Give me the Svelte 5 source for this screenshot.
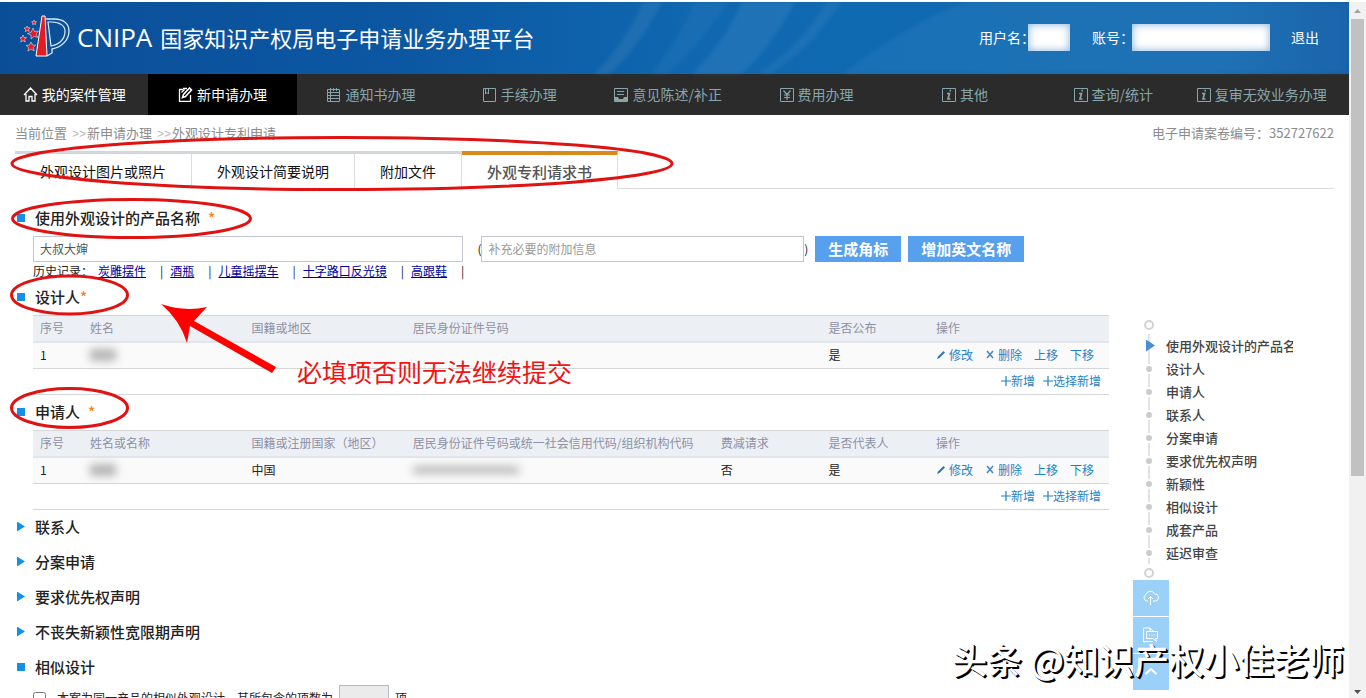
<script>
	let productName = '大叔大婶';
	let extraInfo = '';
	let similar = false;

	const menu = [
		{ label: '我的案件管理', icon: 'home', on: true },
		{ label: '新申请办理', icon: 'edit', on: true, active: true },
		{ label: '通知书办理', icon: 'list' },
		{ label: '手续办理', icon: 'book' },
		{ label: '意见陈述/补正', icon: 'note' },
		{ label: '费用办理', icon: 'yen' },
		{ label: '其他', icon: 'info' },
		{ label: '查询/统计', icon: 'info' },
		{ label: '复审无效业务办理', icon: 'info' }
	];

	const tabs = ['外观设计图片或照片', '外观设计简要说明', '附加文件', '外观专利请求书'];
	let activeTab = 3;

	const history = ['炭雕摆件', '酒瓶', '儿童摇摆车', '十字路口反光镜', '高跟鞋'];

	const tables = [
		{
			title: '设计人',
			tight: true,
			heads: ['序号', '姓名', '国籍或地区', '居民身份证件号码', '', '是否公布', '操作'],
			country: '',
			hasId: false,
			reduce: ''
		},
		{
			title: '申请人',
			tight: false,
			heads: ['序号', '姓名或名称', '国籍或注册国家（地区）', '居民身份证件号码或统一社会信用代码/组织机构代码', '费减请求', '是否代表人', '操作'],
			country: '中国',
			hasId: true,
			reduce: '否'
		}
	];

	const closed = ['联系人', '分案申请', '要求优先权声明', '不丧失新颖性宽限期声明'];

	const anchors = ['使用外观设计的产品名称', '设计人', '申请人', '联系人', '分案申请', '要求优先权声明', '新颖性', '相似设计', '成套产品', '延迟审查'];
</script>

<div class="window">
	<div class="page">
		<header>
			<svg class="streaks" viewBox="0 0 1349 72" preserveAspectRatio="none" aria-hidden="true">
				<path d="M643 0H662Q640 44 610 72H594Q626 40 643 0Z" />
				<path d="M694 0H728Q700 44 668 72H650Q680 36 694 0Z" opacity=".6" />
				<path d="M742 0H795Q772 44 742 72H692Q724 40 742 0Z" />
				<path d="M826 0H842Q810 48 770 72H758Q800 44 826 0Z" opacity=".8" />
				<path d="M966 0H1349V72H842Q910 20 966 0Z" opacity=".7" />
			</svg>
			<svg class="logo" viewBox="0 0 52 44" width="52" height="44" aria-hidden="true">
				<path d="M26 4h8c10 0 15 5 15 12 0 9-7 16-17 18v4l-5 3" fill="none" stroke="#d8ecff" stroke-width="1.300" />
				<path d="M28 7h4c8 0 13 4 13 9 0 8-5 13-14 15z" fill="none" stroke="#d8ecff" stroke-width="1.200" />
				<path d="M22 1h3l2 40h-11z" fill="#e31c24" stroke="#fff" />
				<g fill="#e31c24" stroke="#fff" stroke-width=".5">
					<path d="M13 13l1.500 3.500 4-.5-2.500 3 1.800 3.500-3.800-1.200-2.800 2.700-.2-3.800-3.500-1.700 3.700-1.300z" />
					<path d="M3 20l1 2.500 2.500.2-1.900 1.600.6 2.700L3 25.500.8 27l.5-2.600-1.800-1.700 2.400-.2z" />
					<path d="M11 27l1.500 3 3.200.2-2.400 2.200.9 3.400-3.200-1.700L7.900 36l.7-3.400-2.500-2.200 3.400-.3z" />
					<path d="M7 11l.9 1.900 2.100-.1-1.400 1.600.6 2L7.200 15.500l-1.800 1.200.3-2.200-1.600-1.400 2.100-.2z" />
					<path d="M14 5l.7 1.600 1.800.1-1.300 1.200.3 1.700-1.500-.8-1.400.8.2-1.700-1.200-1.100 1.700-.2z" />
				</g>
			</svg>
			<h1><span>CNIPA</span> 国家知识产权局电子申请业务办理平台</h1>
			<div class="user">
				<span>用户名：</span><i class="mask name"></i>
				<span class="account">账号：</span><i class="mask number"></i>
				<a href="#logout">退出</a>
			</div>
		</header>

		<nav class="menu">
			{#each menu as item}
				<a href="#menu" class:on={item.on} class:active={item.active}>
					<svg viewBox="0 0 15 15" width="15" height="15" fill="none" stroke="currentColor" aria-hidden="true">
						{#if item.icon === 'home'}
							<path d="M1 8l6.500-7L14 8M3 7v7h3V9.500h3V14h3V7" stroke-width="1.300" />
						{:else if item.icon === 'edit'}
							<path d="M5 2.500H1.500v12h11V8" stroke-width="1.300" />
							<path d="M4.500 10.500l1-3 6-6.500 2 2-6 6.500z" stroke-width="1.600" />
							<path d="M3.500 5.500l3-3M5 1.500h4" stroke-width="1.300" />
						{:else if item.icon === 'list'}
							<path d="M1.500 2.500h12v12h-12zM1 5.500h13M1 8.500h13M1 11.500h13M4.500 1v13M7.500 1v3M10.500 1v3" />
						{:else if item.icon === 'book'}
							<path d="M1.500 1.500h12v13h-12z" />
							<path d="M3.500 2v5L5 5.500 6.500 7V2" />
						{:else if item.icon === 'note'}
							<path d="M1.500 1.500h13v13h-13zM4 4.500h7M4 7.500h7" />
							<path d="M2 10h3l1 2h4l1-2h3v4H2z" fill="currentColor" stroke="none" />
						{:else if item.icon === 'yen'}
							<path d="M1.500 1.500h13v13h-13z" />
							<path d="M4.500 3.500L8 7.500l3.500-4M8 7.500V13M5 8h6M5 10.500h6" stroke-width="1.200" />
						{:else}
							<path d="M1.500 1.500h13v13h-13z" />
							<path d="M8.500 3.700h1.500M6 6.500h2.500l-1.500 5.500h2.500" stroke-width="1.700" />
						{/if}
					</svg>
					{item.label}
				</a>
			{/each}
		</nav>

		<div class="crumbs">
			<span>当前位置 <i></i><a href="#new">新申请办理</a> <i></i><a href="#design">外观设计专利申请</a></span>
			<span>电子申请案卷编号：352727622</span>
		</div>

		<div class="tabs">
			{#each tabs as tab, i}
				<button class:current={activeTab === i} on:click={() => (activeTab = i)}>{tab}</button>
			{/each}
		</div>

		<div class="body">
			<main>
				<h2 class="open"><label for="product">使用外观设计的产品名称</label> <em class="star">*</em></h2>
				<div class="fields">
					<input id="product" class="product" bind:value={productName} />
					<span class="paren">(</span>
					<input class="extra" aria-label="补充必要的附加信息" placeholder="补充必要的附加信息" bind:value={extraInfo} />
					<span class="paren">)</span>
					<button>生成角标</button>
					<button>增加英文名称</button>
				</div>
				<div class="history">
					<span>历史记录：</span>
					{#each history as h}
						<a href="#history">{h}</a><b>|</b>
					{/each}
				</div>

				{#each tables as t}
					<h2 class="open" class:tight={t.tight}>{t.title}<em class="star">*</em></h2>
					<table>
						<colgroup>
							<col class="no" /><col class="wide" /><col class="wide" /><col /><col class="narrow" /><col class="narrow" /><col class="ops" />
						</colgroup>
						<thead>
							<tr>
								{#each t.heads as head}
									<th>{head}</th>
								{/each}
							</tr>
						</thead>
						<tbody>
							<tr>
								<td>1</td>
								<td><i class="smudge"></i></td>
								<td>{t.country}</td>
								<td>{#if t.hasId}<i class="smudge long"></i>{/if}</td>
								<td>{t.reduce}</td>
								<td>是</td>
								<td>
									<div class="actions">
										<a href="#edit">
											<svg viewBox="0 0 10 10" width="10" height="10" aria-hidden="true"><path d="M1 9l1-2.500L7.500 1 9 2.500 3.500 8z" fill="#3474b8" /></svg>
											修改
										</a>
										<a href="#del">
											<svg viewBox="0 0 10 10" width="10" height="10" aria-hidden="true"><path d="M2 1l6 7M8 1L2 8" stroke="#4a86c0" stroke-width="1.600" /></svg>
											删除
										</a>
										<a href="#up">上移</a>
										<a href="#down">下移</a>
									</div>
								</td>
							</tr>
						</tbody>
						<tfoot>
							<tr>
								<td colspan="7">
									<div class="adds">
										{#each ['新增', '选择新增'] as add}
											<a href="#add">
												<svg viewBox="0 0 10 10" width="10" height="10" aria-hidden="true"><path d="M5 0v10M0 5h10" stroke="#1c83c6" stroke-width="1.200" /></svg>{add}
											</a>
										{/each}
									</div>
								</td>
							</tr>
						</tfoot>
					</table>
				{/each}

				{#each closed as title}
					<h2>{title}</h2>
				{/each}
				<h2 class="open">相似设计</h2>
				<div class="similar">
					<input id="similar" type="checkbox" bind:checked={similar} />
					<label for="similar">本案为同一产品的相似外观设计，其所包含的项数为</label>
					<input class="count" aria-label="项数" disabled />
					<span>项。</span>
				</div>
			</main>

			<aside>
				<ul>
					{#each anchors as a, i}
						<li class:here={i === 0}><a href="#section">{a}</a></li>
					{/each}
				</ul>
				<div class="tools">
					<button aria-label="上传">
						<svg viewBox="0 0 18 18" width="18" height="18"><path d="M6 12H4.500a3.500 3.500 0 0 1-.5-6.500 4.500 4.500 0 0 1 8.500-.5 3.500 3.500 0 0 1 1 7H11M8.500 16V7.500M6 10l2.500-2.500L11 10" /></svg>
					</button>
					<button aria-label="留言">
						<svg viewBox="0 0 18 18" width="18" height="18"><path d="M3 16H1.500V2H8l3 3M8 2v3M4.500 5.500h11v7h-2l1 3-3.500-3H4.500zM2 15.500h9M7 9h1M9.500 9h1M12 9h1" /></svg>
					</button>
					<button aria-label="返回顶部">
						<svg viewBox="0 0 18 18" width="18" height="18"><path d="M3.500 11L9 6l5.500 5" stroke-width="2" /></svg>
					</button>
				</div>
			</aside>
		</div>
	</div>

	<div class="scrollbar" aria-hidden="true">
		<svg viewBox="0 0 17 17" width="17" height="17"><path d="M5 11l3.500-4 3.500 4z" fill="#a3a3a3" /></svg>
		<div class="track"><div class="thumb"></div></div>
		<svg viewBox="0 0 17 17" width="17" height="17"><path d="M5 9l3.500 4L12 9z" fill="#505050" /></svg>
	</div>

	<svg class="marks" width="700" height="440" viewBox="0 0 700 440" aria-hidden="true">
		<g fill="none" stroke="#e01212" stroke-width="3">
			<ellipse cx="342" cy="163.500" rx="330" ry="26" />
			<ellipse cx="131.500" cy="218.500" rx="119" ry="19" />
			<ellipse cx="69.500" cy="295" rx="58" ry="19" />
			<ellipse cx="69.500" cy="408" rx="58" ry="19.500" />
		</g>
		<path d="M161 304Q184 312 207 307L194 321 276 367 272 373 190 326 187 343Q180 320 161 304Z" fill="#f00" />
	</svg>
	<p class="remark">必填项否则无法继续提交</p>
	<p class="watermark">头条 @知识产权小佳老师</p>
</div>

<style>
	:global(body) {
		background: #fff;
	}

	.window {
		position: relative;
		display: flex;
		height: 100vh;
		padding-top: 2px;
		box-sizing: border-box;
		overflow: hidden;
		font-family: "Noto Sans CJK SC", sans-serif;
		font-size: 12px;
		line-height: 18px;
		color: #222;
	}

	.page {
		flex: 1;
		min-width: 0;
		overflow: hidden;
	}

	a {
		color: inherit;
		text-decoration: none;
	}

	button, input {
		font-family: inherit;
		border-radius: 0;
		margin: 0;
		box-sizing: border-box;
	}

	header {
		position: relative;
		display: flex;
		align-items: center;
		height: 72px;
		padding: 0 30px 2px 20px;
		box-sizing: border-box;
		background: linear-gradient(90deg, #0b4e98 0%, #0c57a2 30%, #0f68b0 52%, #106ab2 70%, #146bb2 90%, #0f5da8 100%);
		color: #fff;
	}

	.streaks {
		position: absolute;
		inset: 0;
		width: 100%;
		height: 100%;
		fill: #fff;
		fill-opacity: .07;
		filter: blur(2px);
	}

	.logo, h1, .user {
		position: relative;
	}

	h1 {
		display: flex;
		align-items: center;
		gap: 8px;
		margin: 0 auto 0 5px;
		font-size: 22px;
		line-height: 30px;
		font-weight: 400;
	}

	h1 span {
		font-family: "Open Sans", sans-serif;
		font-size: 26px;
	}

	.user {
		display: flex;
		align-items: center;
		font-size: 14px;
	}

	.mask {
		height: 27px;
		background: #fff;
		box-shadow: inset 0 0 8px #7fb0dc;
	}

	.name {
		width: 42px;
		margin: 0 22px 0 -7px;
	}

	.number {
		width: 138px;
		margin: 0 21px 0 -2px;
	}

	.menu {
		display: flex;
		height: 41px;
		background: #2b2b2b;
		font-size: 14px;
		color: #86a6ac;
	}

	.menu a {
		flex: 0 0 11%;
		display: flex;
		align-items: center;
		justify-content: center;
		gap: 4px;
		padding-bottom: 2px;
		box-sizing: border-box;
		white-space: nowrap;
	}

	.menu svg {
		margin-top: 2px;
	}

	.menu .on {
		color: #fff;
	}

	.menu .active {
		background: #000;
	}

	.crumbs {
		display: flex;
		justify-content: space-between;
		align-items: center;
		height: 36px;
		padding: 0 15px;
		font-size: 13px;
		color: #8c8c8c;
	}

	.crumbs i::before {
		content: '>>';
		margin: 0 1px 0 2px;
		font: 12px/18px "Liberation Sans", sans-serif;
		color: #bbb;
	}

	.tabs {
		display: flex;
		height: 38px;
		margin: 0 15px;
		box-sizing: border-box;
		border-bottom: 1px solid #dcdcdc;
	}

	.tabs button {
		height: 38px;
		padding: 0 25px 2px;
		border: 0;
		border-top: 3px solid #d2d7dc;
		border-right: 1px solid #dcdcdc;
		background: #fff;
		font-size: 14px;
		color: #111;
	}

	.tabs .current {
		border-top: 4px solid #d98a1a;
		font-size: 15px;
		font-weight: 500;
		color: #555;
	}

	.body {
		display: flex;
		padding-top: 12px;
	}

	main {
		flex: 1;
		min-width: 0;
		padding-left: 33px;
	}

	h2 {
		display: flex;
		align-items: center;
		gap: 8px;
		height: 35px;
		margin: 0 0 0 -16px;
		padding-bottom: 2px;
		box-sizing: border-box;
		font-size: 15px;
		font-weight: 500;
		color: #222;
	}

	h2::before {
		content: '';
		width: 8px;
		height: 10px;
		margin-right: 2px;
		background: #1590e6;
		clip-path: polygon(0 0, 100% 50%, 0 100%);
	}

	h2.open::before {
		height: 8px;
		clip-path: none;
	}

	h2.tight {
		gap: 0;
	}

	h2.tight::before {
		margin-right: 10px;
	}

	.star {
		font-style: normal;
		color: #f58220;
	}

	.fields {
		display: flex;
		align-items: center;
		height: 26px;
	}

	.fields input {
		height: 26px;
		padding: 0 6px 2px;
		border: 1px solid #c2c5d0;
		font-size: 12px;
		color: #555;
	}

	.fields input::placeholder {
		color: #999;
	}

	.fields .product {
		width: 40%;
		margin-right: 14px;
	}

	.fields .extra {
		width: 30%;
	}

	.fields button {
		height: 26px;
		margin-left: 7px;
		padding: 0 13px;
		border: 0;
		background: #56a0ee;
		font-size: 15px;
		line-height: 26px;
		font-weight: 700;
		color: #fff;
	}

	.history {
		display: flex;
		height: 18px;
	}

	.history span {
		margin-right: 5px;
	}

	.history a {
		color: #0000a0;
		text-decoration: underline;
	}

	.history b {
		margin: 0 7px 0 14px;
		font-weight: 400;
	}

	table {
		width: 100%;
		table-layout: fixed;
		border-collapse: separate;
		border-spacing: 0;
		border-top: 1px solid #d4d6da;
	}

	.no {
		width: 50px;
	}

	.wide {
		width: 15%;
	}

	.narrow {
		width: 10%;
	}

	.ops {
		width: 180px;
	}

	th, td {
		height: 26px;
		box-sizing: border-box;
		padding: 0 0 2px 7px;
		border-bottom: 1px solid #d4d6da;
		text-align: left;
		font-weight: 400;
		white-space: nowrap;
	}

	th {
		height: 27px;
		border-bottom: 2px solid #e2e5ea;
		background: #ecf0f5;
		color: #8e90a4;
	}

	tbody td {
		background: #fafafa;
	}

	.smudge {
		display: block;
		width: 26px;
		height: 12px;
		background: #b4b4b4;
		filter: blur(4px);
	}

	.long {
		width: 106px;
		height: 8px;
		background: #bbb;
	}

	.actions, .adds {
		display: flex;
		gap: 12px;
		color: #1c83c6;
	}

	.actions a, .adds a {
		display: flex;
		align-items: center;
		gap: 3px;
	}

	.adds {
		justify-content: flex-end;
		gap: 8px;
		padding-right: 8px;
	}

	.adds a {
		gap: 0;
	}

	.similar {
		display: flex;
		align-items: center;
		height: 26px;
		padding-bottom: 2px;
		white-space: nowrap;
	}

	.similar label {
		margin: 0 6px 0 11px;
	}

	.count {
		width: 50px;
		height: 26px;
		margin-right: 6px;
		border: 1px solid #b8bac4;
		background: #ebebeb;
	}

	aside {
		width: 201px;
		padding: 119px 15px 0 24px;
	}

	ul {
		position: relative;
		margin: 0;
		padding: 14px 0 16px 9px;
		list-style: none;
	}

	ul::before, ul::after {
		content: '';
		position: absolute;
		left: 11px;
		width: 6px;
		height: 6px;
		border: 2px solid #d2d2d2;
		border-radius: 50%;
	}

	ul::before {
		top: 0;
	}

	ul::after {
		bottom: 2px;
	}

	li {
		position: relative;
		display: flex;
		align-items: center;
		width: 151px;
		height: 23px;
		font-size: 13px;
		font-weight: 500;
		color: #444;
	}

	li::before {
		content: '';
		width: 6px;
		height: 6px;
		margin: 0 14px 0 4px;
		flex: none;
		border-radius: 50%;
		background: #ccc;
		box-shadow: 0 0 0 2px #fff;
	}

	li::after {
		content: '';
		position: absolute;
		z-index: -1;
		left: 6px;
		top: 0;
		width: 2px;
		height: 100%;
		background: #e2e2e2;
	}

	li.here::before {
		width: 9px;
		height: 12px;
		margin-right: 11px;
		border-radius: 0;
		background: #4a8ed0;
		clip-path: polygon(0 0, 100% 50%, 0 100%);
	}

	li a {
		width: 128px;
		overflow: hidden;
		white-space: nowrap;
	}

	.tools {
		display: flex;
		flex-direction: column;
		gap: 1px;
		width: 36px;
	}

	.tools button {
		height: 36px;
		padding: 0;
		border: 0;
		background: #9bd0f8;
	}

	.tools svg {
		display: block;
		margin: 0 auto;
		fill: none;
		stroke: #fff;
	}

	.scrollbar {
		display: flex;
		flex-direction: column;
		width: 17px;
		background: #f1f1f1;
	}

	.track {
		flex: 1;
	}

	.thumb {
		width: 13px;
		height: 69%;
		margin: 0 2px;
		background: #c1c1c1;
	}

	.marks {
		position: absolute;
		left: 0;
		top: 0;
		pointer-events: none;
	}

	.remark {
		position: absolute;
		left: 297px;
		top: 353px;
		margin: 0;
		font-size: 25px;
		line-height: 36px;
		color: #f01414;
	}

	.watermark {
		position: absolute;
		right: 22px;
		bottom: 14px;
		margin: 0;
		font-size: 35px;
		line-height: 50px;
		font-weight: 500;
		color: #fff;
		text-shadow: 1px 1px 0 #000, 2px 2px 0 #000;
	}
</style>
